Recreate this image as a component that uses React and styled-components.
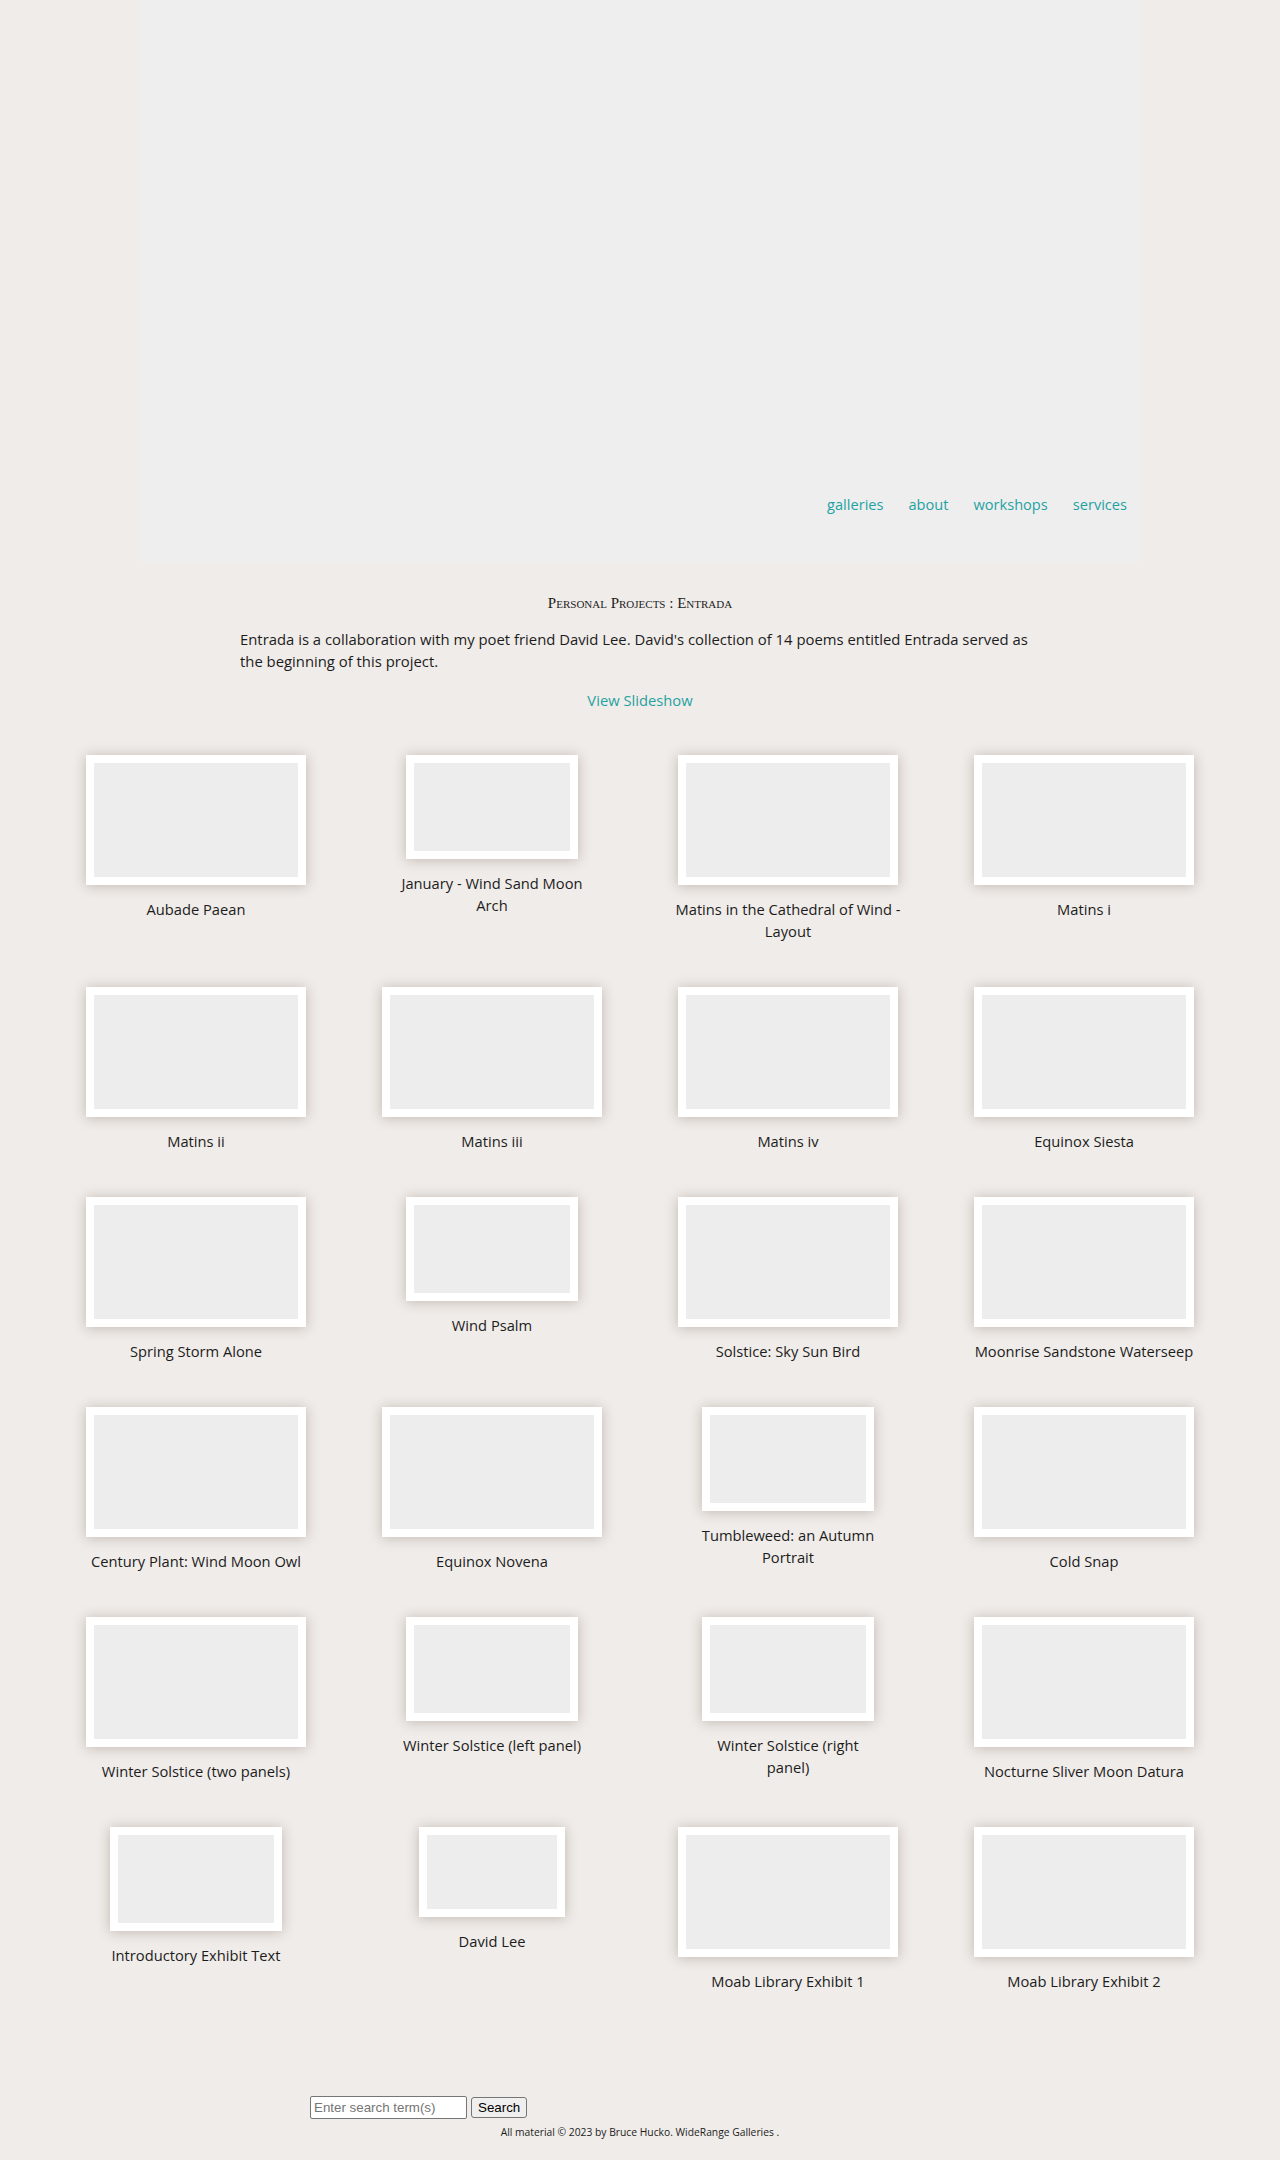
import React from "react";
import styled, { createGlobalStyle } from "styled-components";

const GlobalStyle = createGlobalStyle`
  html, body {
    margin: 0;
    padding: 0;
    background: #f0ece9;
  }
  body {
    font-family: "Open Sans", "Liberation Sans", sans-serif;
    color: #1c1c1c;
  }
`;

const Page = styled.div`
  display: flex;
  flex-direction: column;
  align-items: center;
  min-height: 2160px;
`;

const Header = styled.header`
  width: 1000px;
  height: 562px;
  background: #eeeeee;
  display: flex;
  flex-direction: column;
  justify-content: flex-end;
  align-items: flex-end;
  padding: 0 13px 47px 0;
  box-sizing: border-box;
`;

const Nav = styled.nav`
  display: flex;
  gap: 25px;
`;

const NavLink = styled.a`
  font-size: 14.6px;
  line-height: 22px;
  color: #1fa2a2;
  text-decoration: none;
`;

const Title = styled.h1`
  margin: 31px 0 0;
  font-family: "Liberation Serif", serif;
  font-variant: small-caps;
  font-weight: normal;
  font-size: 15px;
  line-height: 20px;
  color: #1c1c1c;
  text-align: center;
`;

const Intro = styled.p`
  width: 800px;
  margin: 15px 0 0;
  font-size: 14.85px;
  line-height: 22px;
`;

const SlideLink = styled.a`
  margin-top: 17px;
  font-size: 14.75px;
  line-height: 22px;
  color: #1fa2a2;
  text-decoration: none;
`;

const Grid = styled.div`
  width: 1184px;
  margin-top: 44px;
  display: grid;
  grid-template-columns: repeat(4, 1fr);
  align-items: start;
`;

const Cell = styled.div`
  display: flex;
  flex-direction: column;
  align-items: center;
  padding-bottom: 45px;
`;

const Frame = styled.div`
  width: ${p => p.w}px;
  height: ${p => p.h}px;
  box-sizing: border-box;
  border: 8px solid #fff;
  background: #ededed;
  box-shadow: 0 1px 12px rgba(70, 50, 40, 0.28);
`;

const Caption = styled.div`
  width: ${p => p.w}px;
  margin-top: 13px;
  font-size: 14.7px;
  line-height: 22px;
  text-align: center;
  color: #1c1c1c;
`;

const Footer = styled.footer`
  width: 660px;
  margin-top: 59px;
  display: flex;
  flex-direction: column;
`;

const SearchForm = styled.form`
  display: flex;
  align-items: center;
  gap: 4px;
  margin: 0;
`;

const SearchInput = styled.input`
  width: 157px;
  height: 23px;
  box-sizing: border-box;
  border: 1px solid #767676;
  border-radius: 2px;
  padding: 1px 3px;
  font-family: "Liberation Sans", Arial, sans-serif;
  font-size: 13.33px;
  background: #fff;
  &::placeholder {
    color: #757575;
  }
`;

const SearchButton = styled.button`
  height: 21px;
  padding: 1px 6px;
  border: 1px solid #767676;
  border-radius: 3px;
  background: #efefef;
  font-family: "Liberation Sans", Arial, sans-serif;
  font-size: 13.33px;
  color: #000;
`;

const Copyright = styled.div`
  margin-top: 6px;
  text-align: center;
  font-size: 10.3px;
  line-height: 14px;
  color: #1c1c1c;
`;

// [frame width, frame height, caption width]
const BIG = [220, 130, 232];
const SMALL = [172, 104, 190];
const TINY = [146, 90, 190];

const works = [
  ["Aubade Paean", BIG],
  ["January - Wind Sand Moon Arch", SMALL],
  ["Matins in the Cathedral of Wind - Layout", BIG],
  ["Matins i", BIG],
  ["Matins ii", BIG],
  ["Matins iii", BIG],
  ["Matins iv", BIG],
  ["Equinox Siesta", BIG],
  ["Spring Storm Alone", BIG],
  ["Wind Psalm", SMALL],
  ["Solstice: Sky Sun Bird", BIG],
  ["Moonrise Sandstone Waterseep", BIG],
  ["Century Plant: Wind Moon Owl", BIG],
  ["Equinox Novena", BIG],
  ["Tumbleweed: an Autumn Portrait", SMALL],
  ["Cold Snap", BIG],
  ["Winter Solstice (two panels)", BIG],
  ["Winter Solstice (left panel)", SMALL],
  ["Winter Solstice (right panel)", [172, 104, 160]],
  ["Nocturne Sliver Moon Datura", BIG],
  ["Introductory Exhibit Text", SMALL],
  ["David Lee", TINY],
  ["Moab Library Exhibit 1", BIG],
  ["Moab Library Exhibit 2", BIG],
];

const App = () => {
  return (
    <Page>
      <GlobalStyle />
      <Header>
        <Nav>
          <NavLink href="#">galleries</NavLink>
          <NavLink href="#">about</NavLink>
          <NavLink href="#">workshops</NavLink>
          <NavLink href="#">services</NavLink>
        </Nav>
      </Header>
      <Title>Personal Projects : Entrada</Title>
      <Intro>
        Entrada is a collaboration with my poet friend David Lee. David's
        collection of 14 poems entitled Entrada served as the beginning of this
        project.
      </Intro>
      <SlideLink href="#">View Slideshow</SlideLink>
      <Grid>
        {works.map(([name, [w, h, cw]]) => (
          <Cell key={name}>
            <Frame w={w} h={h} />
            <Caption w={cw}>{name}</Caption>
          </Cell>
        ))}
      </Grid>
      <Footer>
        <SearchForm onSubmit={e => e.preventDefault()}>
          <SearchInput type="text" placeholder="Enter search term(s)" />
          <SearchButton type="submit">Search</SearchButton>
        </SearchForm>
        <Copyright>
          All material © 2023 by Bruce Hucko. WideRange Galleries .
        </Copyright>
      </Footer>
    </Page>
  );
};

export default App;
